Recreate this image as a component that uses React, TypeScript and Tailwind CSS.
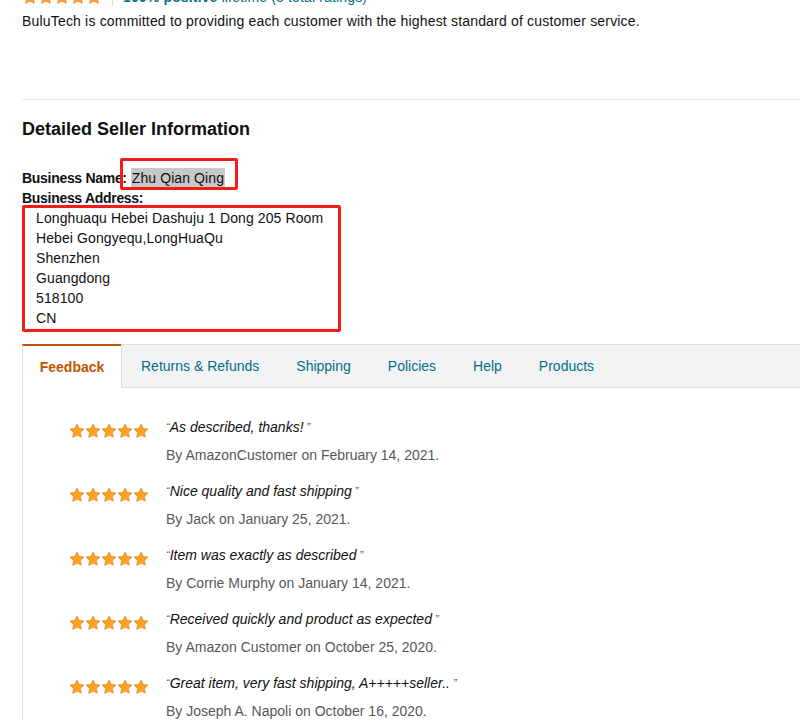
const font = { fontFamily: '"Liberation Sans", Arial, sans-serif' };

const reviews = [
  { text: "As described, thanks!", by: "AmazonCustomer", date: "February 14, 2021" },
  { text: "Nice quality and fast shipping", by: "Jack", date: "January 25, 2021" },
  { text: "Item was exactly as described", by: "Corrie Murphy", date: "January 14, 2021" },
  { text: "Received quickly and product as expected", by: "Amazon Customer", date: "October 25, 2020" },
  { text: "Great item, very fast shipping, A+++++seller..", by: "Joseph A. Napoli", date: "October 16, 2020" },
];

const tabs = ["Returns & Refunds", "Shipping", "Policies", "Help", "Products"];

function Star({ size = 16 }: { size?: number }) {
  return (
    <svg width={size} height={size} viewBox="0 0 24 24">
      <path
        d="M12 1.5l3.2 6.7 7.3.9-5.4 5.1 1.4 7.3L12 18l-6.5 3.5 1.4-7.3-5.4-5.1 7.3-.9z"
        fill="#ffa41c"
        stroke="#de7921"
        strokeWidth="1"
        strokeLinejoin="round"
      />
    </svg>
  );
}

function Stars({ size = 16 }: { size?: number }) {
  return (
    <div className="flex">
      {[0, 1, 2, 3, 4].map((i) => (
        <Star key={i} size={size} />
      ))}
    </div>
  );
}

export default function App() {
  return (
    <div className="h-[726px] w-[800px] overflow-hidden bg-white text-[#0f1111]" style={font}>
      <div className="pl-[22px]">
        {/* rating line, cut off at the top */}
        <div className="-mt-[12px] flex h-[18px] items-center">
          <Stars size={16} />
          <span className="mx-[10px] h-[18px] w-px bg-[#ddd]" />
          <span className="text-[14px] tracking-[0.15px] text-[#007185]">
            <b>100% positive</b> lifetime (5 total ratings)
          </span>
        </div>
        <p className="mt-[5px] text-[14px] leading-[20px] tracking-[0.18px]">
          BuluTech is committed to providing each customer with the highest standard of customer service.
        </p>

        <div className="mt-[68px] h-px bg-[#e7e7e7]" />

        <h2 className="mt-[17px] text-[18px] font-bold leading-[24px]">Detailed Seller Information</h2>

        <div className="mt-[27px] text-[14px] leading-[20px]">
          <div className="flex items-center">
            <span className="font-bold tracking-[-0.3px]">Business Name:</span>
            <span className="relative ml-[4px] bg-[#c8c8c8] px-px tracking-[0.1px]">
              Zhu Qian Qing
              <span className="absolute -left-[11px] -right-[13px] -top-[10px] -bottom-[2px] rounded-[2px] border-[3px] border-[#f51b1b]" />
            </span>
          </div>
          <div className="font-bold tracking-[-0.3px]">Business Address:</div>
          <div className="-mt-[3px] w-[319px] rounded-[2px] border-[3px] border-[#f51b1b] pb-[1px] pl-[11px] tracking-[0.1px]">
            <div>Longhuaqu Hebei Dashuju 1 Dong 205 Room</div>
            <div>Hebei Gongyequ,LongHuaQu</div>
            <div>Shenzhen</div>
            <div>Guangdong</div>
            <div>518100</div>
            <div>CN</div>
          </div>
        </div>

        {/* tabs */}
        <div className="mt-[12px]">
          <div className="flex h-[44px] border-b border-[#ddd]">
            <div className="-mb-px flex w-[99px] items-center justify-center border-l border-t-2 border-[#ddd] border-t-[#c45500] bg-white text-[14px] font-bold text-[#c45500]">
              Feedback
            </div>
            <div className="flex flex-1 items-center gap-[37px] border-l border-t border-[#ddd] bg-[#f3f3f3] pl-[19px] text-[14px] text-[#007185]">
              {tabs.map((t) => (
                <span key={t}>{t}</span>
              ))}
            </div>
          </div>
          <div className="border-l border-[#ddd] pl-[46px] pt-[28px]">
            {reviews.map((r) => (
              <div key={r.by} className="mb-[17px] flex">
                <div className="mt-[7px] w-[97px]">
                  <Stars size={16} />
                </div>
                <div className="text-[14px]">
                  <div className="italic leading-[22px]">
                    <span className="align-top text-[11px] text-[#555]">“</span>
                    {r.text}
                    <span className="align-top text-[11px] text-[#555]"> ”</span>
                  </div>
                  <div className="mt-[9px] leading-[16px] text-[#565959]">
                    By {r.by} on {r.date}.
                  </div>
                </div>
              </div>
            ))}
          </div>
        </div>
      </div>
    </div>
  );
}
